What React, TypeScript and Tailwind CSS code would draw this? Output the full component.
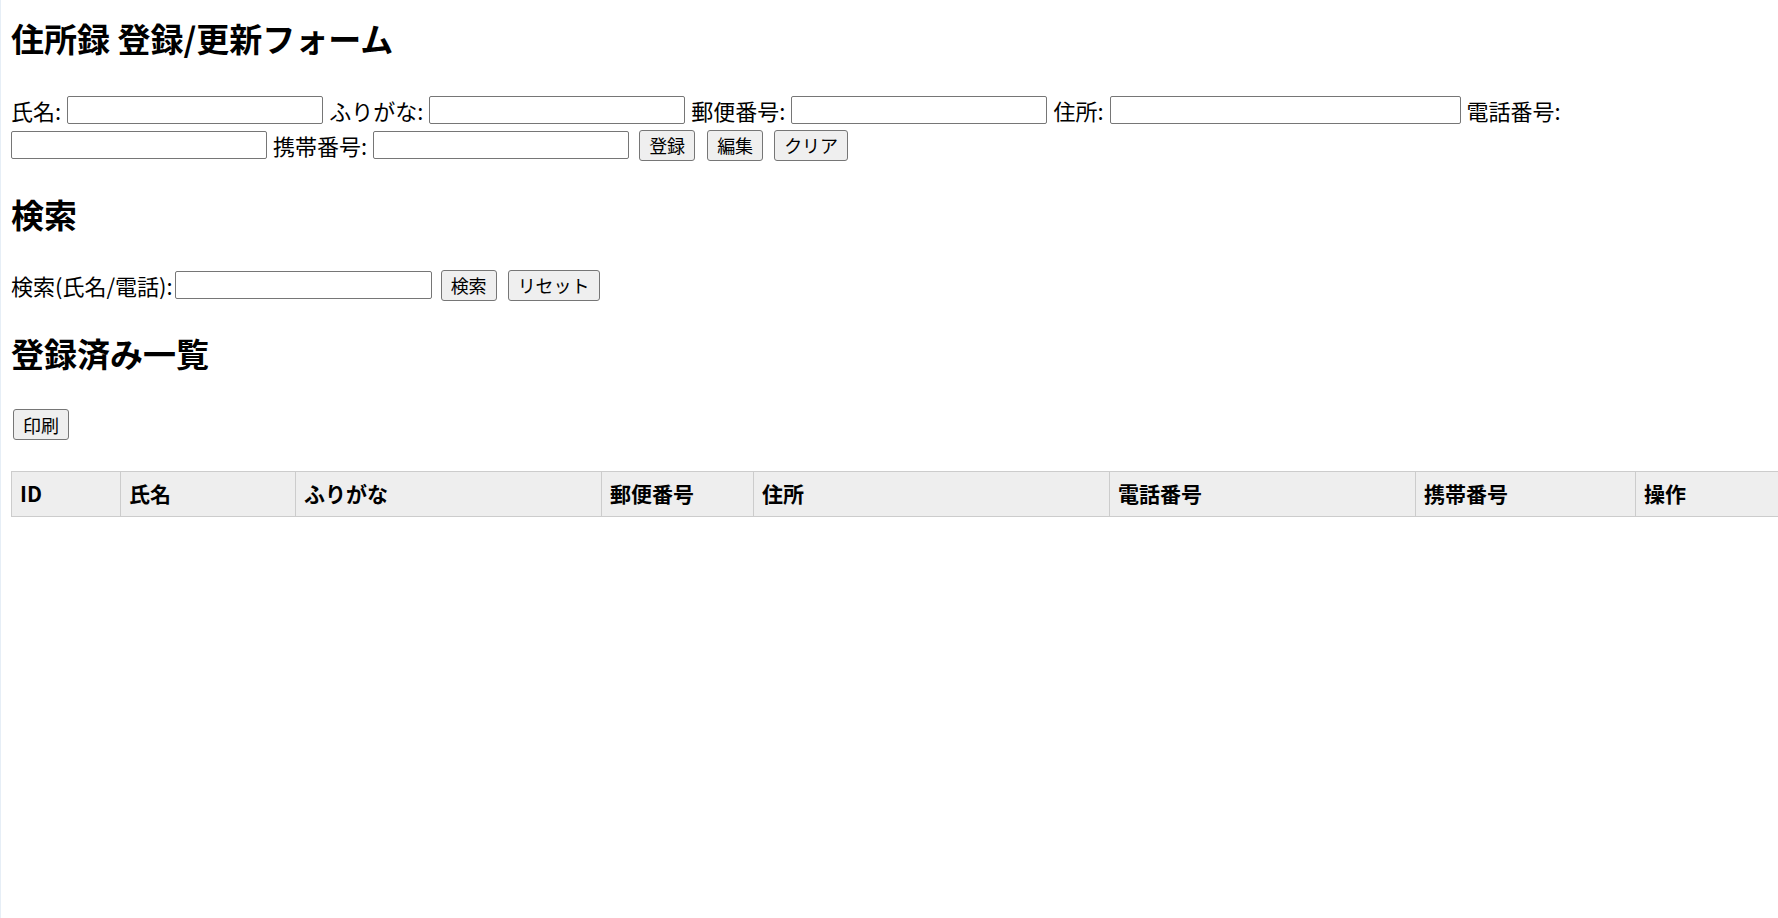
const font = { fontFamily: '"Noto Sans CJK JP", "Noto Sans", sans-serif' };

const inputCls =
  "h-[28px] border border-[#767676] rounded-[2px] bg-white px-1 text-[17px] outline-none";
const btnCls =
  "h-[31px] px-[9px] border border-[#767676] rounded-[3px] bg-[#efefef] text-[18px] leading-none text-black";

function Field({ label, width = "w-[256px]" }: { label: string; width?: string }) {
  return (
    <>
      <span className="whitespace-nowrap">{label}</span>
      <input type="text" className={`${inputCls} ${width}`} />
    </>
  );
}

const columns = [
  { name: "ID", w: "w-[109px]" },
  { name: "氏名", w: "w-[175px]" },
  { name: "ふりがな", w: "w-[306px]" },
  { name: "郵便番号", w: "w-[152px]" },
  { name: "住所", w: "w-[356px]" },
  { name: "電話番号", w: "w-[306px]" },
  { name: "携帯番号", w: "w-[220px]" },
  { name: "操作", w: "" },
];

export default function App() {
  return (
    <div
      className="min-h-[918px] w-full overflow-hidden bg-white pl-[10px] text-black border-l border-[#e6eef6]"
      style={font}
    >
      <h1 className="mt-[18px] h-[40px] text-[33px] font-bold leading-[40px] whitespace-nowrap">
        住所録 登録/更新フォーム
      </h1>

      {/* 登録フォーム */}
      <div className="mt-[38px] flex h-[28px] items-center gap-[6px] text-[22px]">
        <Field label="氏名:" />
        <Field label="ふりがな:" />
        <Field label="郵便番号:" />
        <Field label="住所:" width="w-[351px]" />
        <span className="whitespace-nowrap">電話番号:</span>
      </div>
      <div className="mt-[5px] flex h-[32px] items-center gap-[6px] text-[22px]">
        <input type="text" className={`${inputCls} w-[256px]`} />
        <Field label="携帯番号:" />
        <button className={`${btnCls} ml-[4px]`}>登録</button>
        <button className={`${btnCls} ml-[6px]`}>編集</button>
        <button className={`${btnCls} ml-[5px]`}>クリア</button>
      </div>

      <h2 className="mt-[33px] h-[40px] text-[33px] font-bold leading-[40px]">検索</h2>
      <div className="mt-[35px] flex h-[32px] items-center text-[22px]">
        <span className="whitespace-nowrap">検索(氏名/電話):</span>
        <input type="text" className={`${inputCls} ml-[2px] w-[257px]`} />
        <button className={`${btnCls} ml-[9px]`}>検索</button>
        <button className={`${btnCls} ml-[11px]`}>リセット</button>
      </div>

      <h2 className="mt-[32px] h-[40px] text-[33px] font-bold leading-[40px]">登録済み一覧</h2>
      <div className="mt-[36px] h-[31px]">
        <button className={`${btnCls} ml-[2px]`}>印刷</button>
      </div>

      <table className="mt-[31px] w-[1790px] border-collapse">
        <thead>
          <tr className="h-[45px] bg-[#eeeeee]">
            {columns.map((c) => (
              <th
                key={c.name}
                className={`${c.w} border border-[#cccccc] px-[8px] text-left text-[21px] font-bold align-middle whitespace-nowrap`}
              >
                {c.name}
              </th>
            ))}
          </tr>
        </thead>
        <tbody />
      </table>
    </div>
  );
}
